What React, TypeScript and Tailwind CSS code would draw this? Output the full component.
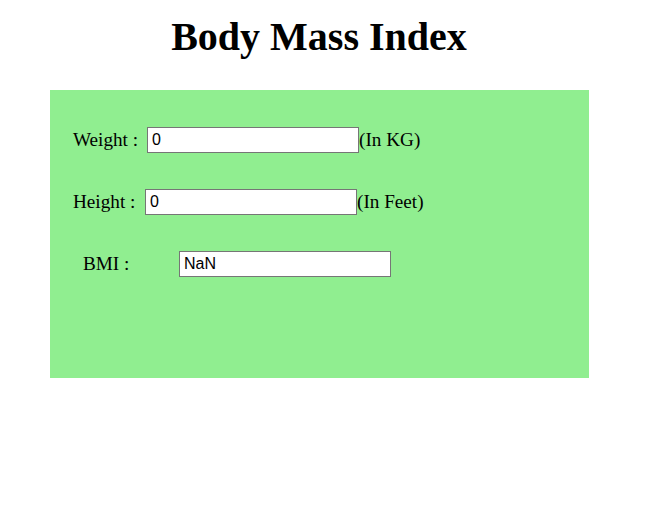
export default function App() {
  const serif = { fontFamily: '"Liberation Serif", "Times New Roman", serif' };
  const inputCls =
    "w-[212px] h-[26px] bg-white border border-[#767676] pl-[4px] pr-[2px] text-[16px] text-black outline-none [font-family:'Liberation_Sans',Arial,sans-serif]";
  return (
    <div className="w-[638px] bg-white text-black" style={serif}>
      <div className="h-[90px] pt-[14px]">
        <h1 className="text-center text-[40px] font-bold leading-[46px]">Body Mass Index</h1>
      </div>
      <div className="ml-[50px] w-[539px] h-[288px] bg-[#90EE90] pt-[37px] flex flex-col gap-[36px] text-[19.2px] leading-[22px]">
        <div className="flex items-center h-[26px] pl-[23px]">
          <span className="w-[74px] shrink-0">Weight :</span>
          <input className={inputCls} defaultValue="0" />
          <span>(In KG)</span>
        </div>
        <div className="flex items-center h-[26px] pl-[23px]">
          <span className="w-[72px] shrink-0">Height :</span>
          <input className={inputCls} defaultValue="0" />
          <span>(In Feet)</span>
        </div>
        <div className="flex items-center h-[26px] pl-[33px]">
          <span className="w-[96px] shrink-0">BMI :</span>
          <input className={inputCls} defaultValue="NaN" readOnly />
        </div>
      </div>
    </div>
  );
}
